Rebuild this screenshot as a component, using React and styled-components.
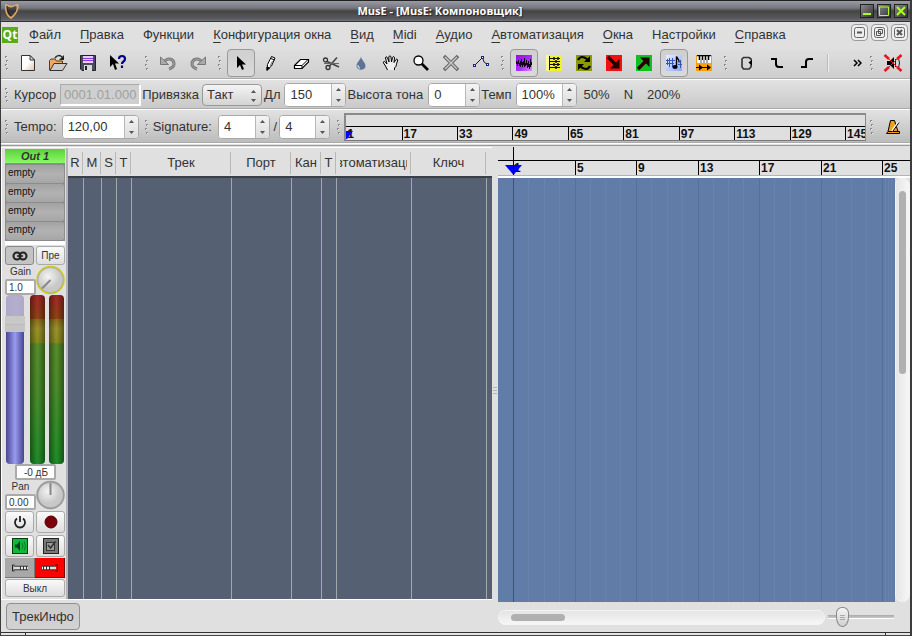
import React from "react";
import styled, { createGlobalStyle, css } from "styled-components";

const GlobalStyle = createGlobalStyle`
  * {
    box-sizing: border-box;
  }
  body {
    margin: 0;
    background: #e0e0e0;
    color: #333;
    font-family: "Liberation Sans", Arial, sans-serif;
    font-size: 13px;
  }
  button, input, select {
    font-family: inherit;
    font-size: inherit;
    color: inherit;
    margin: 0;
    padding: 0;
  }
`;

const Window = styled.div`
  min-height: 100vh;
  display: flex;
  flex-direction: column;
  border-left: 1px solid #3c3c3c;
  border-right: 2px solid #3c3c3c;
`;

/* ---------- title bar ---------- */

const TitleBar = styled.header`
  display: flex;
  align-items: center;
  height: 22px;
  padding: 0 2px 0 3px;
  border-top: 1px solid #222;
  border-bottom: 1px solid #333;
  background: linear-gradient(#9a9aa6, #77777f 35%, #454545 50%, #5a5a60 90%, #77777f);
`;

const Title = styled.h1`
  flex: 1;
  margin: 0;
  text-align: center;
  font-family: "Open Sans", sans-serif;
  font-size: 11px;
  line-height: 20px;
  font-weight: 700;
  color: #fff;
  text-shadow: 1px 1px 1px #222;
`;

const TitleButtons = styled.div`
  display: flex;
  gap: 3px;
`;

const TitleButton = styled.button`
  width: 14px;
  height: 14px;
  border: 1px solid #222;
  background: linear-gradient(135deg, #8a8a8a, #333);
  display: flex;
  align-items: center;
  justify-content: center;
`;

/* ---------- menu ---------- */

const MenuBar = styled.nav`
  display: flex;
  align-items: center;
  height: 25px;
  padding: 0 2px 0 1px;
`;

const MenuItem = styled.a`
  margin-left: 19px;
  color: #333;
  text-decoration: none;
  line-height: 20px;
  white-space: nowrap;
  &:first-of-type {
    margin-left: 11px;
  }
`;

const Key = styled.span`
  text-decoration: underline;
  text-underline-offset: 3px;
  text-decoration-thickness: 1px;
`;

const MdiButtons = styled.div`
  display: flex;
  gap: 3px;
  margin-left: auto;
  align-self: flex-start;
  padding-top: 2px;
`;

const MdiButton = styled.button`
  width: 17px;
  height: 17px;
  border: 1px solid #999;
  border-radius: 4px;
  background: #eee;
  display: flex;
  align-items: center;
  justify-content: center;
`;

/* ---------- toolbars ---------- */

const ToolBar = styled.div`
  display: flex;
  align-items: center;
  height: ${(p) => p.$height};
  padding: 0 3px 0 1px;
  background: linear-gradient(${(p) => p.$from || "#e2e2e2"}, ${(p) => p.$to || "#c8c8c8"});
  border-bottom: 1px solid #fff;
  box-shadow: inset 0 -1px #aaa;
  white-space: nowrap;
`;

const Group = styled.div`
  display: flex;
  align-items: center;
  gap: ${(p) => p.$gap || "2px"};
  margin-left: ${(p) => p.$left || "0"};
  flex: ${(p) => (p.$grow ? "1" : "none")};
  min-width: 0;
`;

const GripBox = styled.span`
  flex: none;
  display: flex;
  width: ${(p) => p.$width || "10px"};
  padding-left: 3px;
`;

const ToolButton = styled.button`
  flex: none;
  width: 28px;
  height: 28px;
  border: 1px solid transparent;
  border-radius: 4px;
  background: none;
  display: flex;
  align-items: center;
  justify-content: center;
  ${(p) =>
    p.$active &&
    css`
      border-color: #999;
      background: linear-gradient(#cfcfcf, #dadada);
    `}
`;

const Separator = styled.span`
  width: 2px;
  height: 18px;
  margin: 0 22px 0 4px;
  border-left: 1px solid #bbb;
  border-right: 1px solid #eee;
`;

const Label = styled.label`
  line-height: 20px;
  margin-right: ${(p) => p.$right || "3px"};
`;

const CursorField = styled.input`
  width: 81px;
  height: 22px;
  border: 2px solid #fff;
  border-top: 1px solid #aaa;
  border-left: 1px solid #aaa;
  margin-right: 1px;
  background: #cfcfcf;
  color: #a0a0a0;
  text-align: center;
`;

const SpinBox = styled.span`
  display: flex;
  flex: none;
  width: ${(p) => p.$width};
  height: 24px;
  border: 1px solid #a8a8a8;
  border-radius: 4px;
  background: #fff;
  overflow: hidden;
`;

const SpinInput = styled.input`
  flex: 1;
  min-width: 0;
  border: 0;
  padding-left: 5px;
  background: #fff;
`;

const SpinButtons = styled.span`
  display: flex;
  flex-direction: column;
  width: 14px;
  border-left: 1px solid #b8b8b8;
  background: linear-gradient(#f4f4f4, #dcdcdc);
`;

const SpinButton = styled.button`
  flex: 1;
  border: 0;
  background: none;
  display: flex;
  align-items: center;
  justify-content: center;
`;

const SelectBox = styled.span`
  position: relative;
  display: flex;
`;

const Select = styled.select`
  appearance: none;
  width: 60px;
  height: 22px;
  padding-left: 4px;
  border: 1px solid #999;
  border-radius: 4px;
  background: linear-gradient(#f4f4f4, #d4d4d4);
`;

const SelectArrows = styled.svg`
  position: absolute;
  right: 5px;
  top: 6px;
  pointer-events: none;
`;

const TextButton = styled.button`
  border: 0;
  background: none;
  line-height: 20px;
  padding: 0 7px;
`;

const Overview = styled.div`
  flex: 1;
  min-width: 0;
  height: 28px;
  border-top: 2px solid #8a8a8a;
  border-left: 2px solid #8a8a8a;
  border-right: 1px solid #8a8a8a;
  border-bottom: 1px solid #777;
  background: #dfdfdf;
  padding-top: 11px;
  overflow: hidden;
`;

const OverviewScale = styled.div`
  display: grid;
  grid-template-columns: repeat(9, minmax(0, 25fr)) minmax(0, 9fr);
  height: 14px;
  border-top: 1px solid #000;
`;

const Mark = styled.span`
  position: relative;
  border-left: ${(p) => (p.$first ? "0" : "1px solid #000")};
  padding-left: 1px;
  overflow: ${(p) => (p.$first ? "visible" : "hidden")};
  font-size: 12px;
  line-height: 14px;
  font-weight: 700;
  color: #111;
`;

const OverviewCursor = styled.svg`
  position: absolute;
  left: 0;
  top: 3px;
`;

/* ---------- main area ---------- */

const Main = styled.main`
  flex: 1;
  display: flex;
  margin-top: 1px;
  border-top: 1px solid #999;
  padding-top: 1px;
`;

const LeftSide = styled.section`
  display: flex;
  flex-direction: column;
  width: 491px;
`;

const Tracks = styled.div`
  flex: 1;
  display: flex;
  border-top: 1px solid #fff;
  border-bottom: 1px solid #fff;
`;

const Strip = styled.div`
  flex: none;
  width: 67px;
  padding: 1px 1px 0 3px;
  border-left: 1px solid #fff;
  border-right: 2px solid #b4b4b4;
  display: flex;
  flex-direction: column;
  font-size: 10px;
`;

const StripName = styled.div`
  height: 14px;
  line-height: 14px;
  text-align: center;
  font-size: 11px;
  font-weight: 700;
  font-style: italic;
  background: linear-gradient(#5cd03c, #8bfa66);
`;

const Rack = styled.ul`
  list-style: none;
  margin: 0 0 1px;
  padding: 2px 1px 0;
  background: #8c8c8c;
  border-bottom: 4px solid #fff;
`;

const RackSlot = styled.li`
  height: 18px;
  margin-bottom: 1px;
  padding-left: 2px;
  line-height: 16px;
  color: #111;
  border-radius: 2px;
  background: linear-gradient(#a2a2a2, #b2b2b2 50%, #a6a6a6);
`;

const StripRow = styled.div`
  display: flex;
  justify-content: space-between;
  gap: ${(p) => p.$gap || "2px"};
  margin-bottom: ${(p) => p.$bottom || "0"};
`;

const StripButton = styled.button`
  flex: 1;
  height: ${(p) => p.$height || "18px"};
  border: 1px solid ${(p) => (p.$pressed ? "#888" : "#aaa")};
  border-radius: 3px;
  background: ${(p) => (p.$pressed ? "#c4c4c4" : "linear-gradient(#fafafa, #dedede)")};
  display: flex;
  align-items: center;
  justify-content: center;
`;

const RouteButton = styled.button`
  flex: 1;
  height: 20px;
  border: 1px solid ${(p) => (p.$on ? "#700" : "#777")};
  border-width: 0 1px 1px 0;
  background: ${(p) => (p.$on ? "#ff0000" : "#a8a8a8")};
  display: flex;
  align-items: center;
  justify-content: center;
`;

const KnobField = styled.div`
  display: flex;
  flex-direction: column;
  align-items: center;
  width: 31px;
`;

const KnobLabel = styled.label`
  line-height: 14px;
  height: 14px;
`;

const ValueInput = styled.input`
  width: ${(p) => p.$width || "31px"};
  height: 16px;
  border: 2px solid #aaa;
  border-radius: 2px;
  background: #fff;
  text-align: ${(p) => p.$align || "left"};
  padding-left: 2px;
`;

const KnobBox = styled.div`
  position: relative;
  width: 29px;
  height: 30px;
  flex: none;
`;

const KnobRange = styled.input`
  position: absolute;
  inset: 0;
  width: 100%;
  height: 100%;
  opacity: 0;
`;

const Meters = styled.div`
  flex: 1;
  min-height: 169px;
  display: flex;
  gap: 4px;
  padding: 0 1px;
`;

const Fader = styled.input`
  appearance: none;
  writing-mode: vertical-lr;
  direction: rtl;
  width: 18px;
  margin-right: 2px;
  border-radius: 4px;
  background: linear-gradient(#b5b0ccee 22%, transparent 22%),
    linear-gradient(90deg, #45458f, #9a9af0 50%, #45458f);
  &::-webkit-slider-thumb {
    appearance: none;
    width: 20px;
    height: 16px;
    background: linear-gradient(#c8c8c8 50%, #b8b8b8 50%, #c4c4c4 60%);
  }
`;

const Meter = styled.div`
  width: 15px;
  border-radius: 4px;
  background: linear-gradient(90deg, #0006, transparent 45%, transparent 55%, #0006),
    linear-gradient(#a02626, #8c4414 14%, #8a6a1a 14%, #98902a 20%, #888a1a 28%, #558a2a 29%, #4a8a2a 55%, #1e8a28);
`;

const Below = styled.div`
  display: flex;
  justify-content: center;
`;

const TableArea = styled.div`
  flex: 1;
  min-width: 0;
`;

const TrackTable = styled.table`
  width: 100%;
  height: 100%;
  table-layout: fixed;
  border-collapse: separate;
  border-spacing: 0;
`;

const HeadCell = styled.th`
  height: 30px;
  padding: 1px 0 0;
  border-bottom: 2px solid #3a4048;
  font-weight: 400;
`;

const HeadText = styled.div`
  display: flex;
  justify-content: center;
  height: 22px;
  line-height: 22px;
  margin-right: 1px;
  border-right: ${(p) => (p.$last ? "0" : "1px solid #b8b8b8")};
`;

const HeadClip = styled.span`
  display: flex;
  justify-content: center;
  flex: 1;
  min-width: 0;
  margin: 0 3px;
  overflow: hidden;
  white-space: nowrap;
`;

const BodyCell = styled.td`
  padding: 0;
  background: #556172;
  border-right: ${(p) => (p.$last ? "0" : "1px solid #a3a6ab")};
`;

const TrackInfoRow = styled.div`
  padding: 3px 5px 2px;
`;

const TrackInfoButton = styled.button`
  height: 27px;
  padding: 0 5px;
  border: 1px solid #909090;
  border-radius: 4px;
  background: linear-gradient(#cccccc, #d2d2d2);
`;

const Splitter = styled.div`
  width: 6px;
  display: flex;
  align-items: center;
  justify-content: center;
`;

const Arranger = styled.section`
  flex: 1;
  min-width: 0;
  display: flex;
  flex-direction: column;
`;

const barColumns = css`
  display: grid;
  grid-template-columns: 15px 62px 61px 62px 61px 62px 61px minmax(0, 1fr);
`;

const Ruler = styled.div`
  position: relative;
  height: 31px;
  padding-top: 13px;
  border-bottom: 2px solid #fff;
  box-shadow: inset 0 -1px #b4b4b4;
`;

const RulerScale = styled.div`
  ${barColumns}
  height: 15px;
  border-top: 1px solid #000;
`;

const Playhead = styled.svg`
  position: absolute;
  left: 6px;
  top: 0;
`;

const CanvasRow = styled.div`
  flex: 1;
  display: flex;
`;

const Canvas = styled.div`
  ${barColumns}
  flex: 1;
  background: #617ca7;
`;

const CanvasBar = styled.div`
  display: grid;
  grid-template-columns: repeat(4, 1fr);
  border-left: 1px solid ${(p) => (p.$current ? "#e0101c" : "#55709a")};
  overflow: hidden;
`;

const Beat = styled.span`
  border-right: 1px solid #6783ae;
  &:last-child {
    border-right: 0;
  }
`;

const VScroll = styled.div`
  width: 15px;
  padding: 12px 3px;
  border-radius: 7px;
  border: 1px solid #f2f2f2;
  background: linear-gradient(90deg, #e6e6e6, #f6f6f6);
`;

const VThumb = styled.div`
  width: 7px;
  height: 46%;
  margin: 0 auto;
  border-radius: 4px;
  background: #b0b0b0;
`;

const ScrollRow = styled.div`
  display: flex;
  align-items: center;
  height: 30px;
  padding-right: 16px;
  gap: 3px;
`;

const HScroll = styled.div`
  flex: 1;
  height: 15px;
  padding: 3px 12px;
  border: 1px solid #f4f4f4;
  border-radius: 7px;
  background: linear-gradient(#e4e4e4, #f6f6f6);
`;

const HThumb = styled.div`
  width: 18%;
  height: 7px;
  border-radius: 4px;
  background: #b0b0b0;
`;

const ZoomRange = styled.input`
  appearance: none;
  width: 66px;
  height: 22px;
  background: linear-gradient(transparent 9px, #aaa 9px, #c8c8c8 12px, #fff 12px, #fff 13px, transparent 13px);
  &::-webkit-slider-thumb {
    appearance: none;
    width: 13px;
    height: 20px;
    border: 1px solid #888;
    border-radius: 6px 6px 6px 6px / 6px 6px 10px 10px;
    background: linear-gradient(transparent 7px, #aaa 7px, #aaa 8px, transparent 8px, transparent 9px, #aaa 9px, #aaa 10px, transparent 10px, transparent 11px, #aaa 11px, #aaa 12px, transparent 12px) 3px 0 / 5px 100% no-repeat,
      linear-gradient(#f4f4f4, #d0d0d0);
  }
`;

const WindowFoot = styled.footer`
  display: flex;
  justify-content: space-between;
  height: 5px;
  padding: 0 24px;
  border-top: 1px solid #333;
  border-bottom: 2px solid #444;
  background: #e4e4e4;
`;

const FootMark = styled.span`
  width: 1px;
  background: #333;
`;

/* ---------- icons ---------- */

const Icon = ({ w = 16, h = 16, children }) => (
  <svg width={w} height={h} viewBox={`0 0 ${w} ${h}`} fill="none" aria-hidden="true">
    {children}
  </svg>
);

const Grip = ({ width }) => (
  <GripBox $width={width}>
    <Icon w={4} h={14}>
      {[0, 4, 8, 12].map((y) => (
        <g key={y}>
          <rect x={y % 8 ? 1 : 0} y={y} width="2" height="2" fill="#8a8a8a" />
          <rect x={y % 8 ? 2 : 1} y={y + 1} width="1" height="1" fill="#f6f6f6" />
        </g>
      ))}
    </Icon>
  </GripBox>
);

const Harp = () => (
  <Icon w={16} h={18}>
    <path d="M2 2C1 9 3 14 7 16C11 13 14 9 14 3C11 2 9 7 3 3" stroke="#e0a868" strokeWidth="1.6" />
    <path d="M5 5V12M7 6V14M9 5V12M11 4V10" stroke="#222" />
    <path d="M3 4C3 9 5 12 7 14" stroke="#2a1a10" />
  </Icon>
);

const QtLogo = styled.span`
  width: 16px;
  height: 16px;
  background: #5caa15;
  color: #fff;
  font: 700 12px/16px "Open Sans", sans-serif;
  text-align: center;
`;

const NewIcon = () => (
  <Icon w={16} h={18}>
    <defs>
      <linearGradient id="paper" x1="0" y1="0" x2="1" y2="1">
        <stop offset=".5" stopColor="#fff" />
        <stop offset="1" stopColor="#d8c0b0" />
      </linearGradient>
    </defs>
    <path d="M1.5 1.5H10L14.5 6V16.5H1.5Z" fill="url(#paper)" stroke="#333" />
    <path d="M10 1.5V6H14.5Z" fill="#ddd" stroke="#333" />
  </Icon>
);

const OpenIcon = () => (
  <Icon w={20} h={18}>
    <path d="M1.5 16V6.5L3 5H7L8.5 7H14.5V16Z" fill="#f0a860" stroke="#5a3a1a" />
    <path d="M2 16.5L6 9.5H19L14.5 16.5Z" fill="#ccc" stroke="#333" />
    <path d="M7 4C9 1 12 1 14 3" stroke="#222" strokeWidth="1.5" />
    <path d="M16 1V6H11Z" fill="#222" />
  </Icon>
);

const SaveIcon = () => (
  <Icon w={18} h={18}>
    <path d="M1.5 1.5H16.5V16.5H3L1.5 15Z" fill="#4a4a60" stroke="#222" />
    <rect x="4" y="2" width="10" height="7" fill="#e8ccff" />
    <path d="M4 4.5H14M4 6.5H14" stroke="#8a3ae0" />
    <rect x="5" y="11" width="8" height="6" fill="#d8d8d8" />
    <rect x="6" y="12" width="2" height="4" fill="#222" />
  </Icon>
);

const WhatsThisIcon = () => (
  <Icon w={18} h={18}>
    <path d="M1 1V13L4 10L6 16L8 15L6 9.5H10Z" fill="#000" />
    <path d="M10 5C10 1 16 1 16 5C16 8 13 7 13 10M13 11.5V14" stroke="#00008a" strokeWidth="2.2" />
  </Icon>
);

const UndoIcon = ({ flip }) => (
  <Icon w={18} h={16}>
    <g transform={flip ? "translate(18 0) scale(-1 1)" : undefined}>
      <path d="M5 7C9 2 15 4 15 9C15 11 13 13 10 14" stroke="#777" strokeWidth="3" />
      <path d="M5 7C9 2 15 4 15 9C15 11 13 13 10 14" stroke="#aaa" />
      <path d="M1.5 2V9.5H9.5Z" fill="#aaa" stroke="#777" />
    </g>
  </Icon>
);

const PointerIcon = () => (
  <Icon>
    <path d="M4 1V13L7 10L9 15L11 14L9 9.5H13Z" fill="#000" />
  </Icon>
);

const PencilIcon = () => (
  <Icon>
    <path d="M4.5 9.5L8.5 1.5L12 3L8.5 11L4 15Z" fill="#fff" stroke="#000" />
    <path d="M4 12L6.5 13L4 15.5ZM8 3.5L11.5 5" fill="#000" stroke="#000" />
    <path d="M9.5 6L7 11" stroke="#777" />
  </Icon>
);

const EraserIcon = () => (
  <Icon w={18} h={16}>
    <path d="M2.5 10.5L8.5 4.5H16.5V7L10 13.5H2.5Z" fill="#fff" stroke="#000" strokeWidth="1.2" />
    <path d="M2.5 10.5H10L16 4.5M10 10.5V13.5" stroke="#000" />
  </Icon>
);

const ScissorsIcon = () => (
  <Icon w={18} h={16}>
    <path d="M5 6.5L17 12M7.5 11L15 2.5" stroke="#444" strokeWidth="1.6" />
    <path d="M2 8.5H17" stroke="#666" />
    <circle cx="3.5" cy="5" r="2" stroke="#333" strokeWidth="1.3" />
    <circle cx="6" cy="12.5" r="2" stroke="#333" strokeWidth="1.3" />
  </Icon>
);

const DropIcon = () => (
  <Icon>
    <path d="M8 1C8 5 3.5 7 3.5 11C3.5 16 12.5 16 12.5 11C12.5 7 8 5 8 1Z" fill="#5e7494" />
    <path d="M5 10C5 12 6 13 7 13" stroke="#c0cede" strokeWidth="1.4" />
  </Icon>
);

const HandIcon = () => (
  <Icon w={18} h={16}>
    <path
      d="M5.5 15L3.5 11L1.5 8C1 6 3 6 4 8L5 9L3.5 3C3.5 1.5 5 1.5 5.5 3L7 7L6.8 2C7 .5 8.8 .5 9 2L9.5 7L10.5 2.5C11 1 12.5 1.5 12.5 3L12 7.5L14 4.5C15 3.5 16 4.5 15.5 6C14 9 15 11 12.5 13V15"
      fill="#eee"
      stroke="#000"
    />
  </Icon>
);

const ZoomIcon = () => (
  <Icon w={18} h={18}>
    <path d="M9.5 9.5L16 16" stroke="#000" strokeWidth="2.6" />
    <circle cx="6.5" cy="6.5" r="4.5" fill="#fff" stroke="#000" strokeWidth="1.3" />
  </Icon>
);

const CrossIcon = () => (
  <Icon w={18} h={18}>
    <path d="M2 2L16 16M16 2L2 16" stroke="#666" strokeWidth="3.4" />
    <path d="M3 3L15 15M15 3L3 15" stroke="#ccc" strokeWidth="1.4" />
  </Icon>
);

const LineIcon = () => (
  <Icon w={18} h={16}>
    <path d="M2.5 10.5L10.5 2.5L12 7L15.5 9.5" stroke="#222" />
    <g fill="#fff" stroke="#102a7a">
      <rect x="1.5" y="9.5" width="2" height="2" />
      <rect x="9.5" y="1.5" width="2" height="2" />
      <rect x="14.5" y="8.5" width="2" height="2" />
    </g>
  </Icon>
);

const WaveIcon = () => (
  <Icon>
    <defs>
      <linearGradient id="wave" x1="0" y1="0" x2="1" y2="1">
        <stop offset="0" stopColor="#9010e0" />
        <stop offset=".6" stopColor="#b030ff" />
        <stop offset="1" stopColor="#d890ff" />
      </linearGradient>
    </defs>
    <rect width="16" height="16" fill="url(#wave)" />
    <path d="M.5 6V9M1.5 7V11M2.5 5V9M3.5 8V11M4.5 6V12M5.5 4V10M6.5 7V12M7.5 6V10M8.5 3V12M9.5 8V11M10.5 5V10M11.5 8V13M12.5 6V12M13.5 9V14M14.5 4V12M15.5 7V10" stroke="#14001e" />
  </Icon>
);

const DrumIcon = () => (
  <Icon>
    <rect width="16" height="16" fill="#f2f22a" />
    <path d="M0 0H3V16H0Z" fill="#fafa9a" />
    <path d="M3.5 1V15M3 3.5H14M3 6.5H14M3 9.5H14M3 12.5H14" stroke="#111" />
    <path d="M7 3.5H9M11 3.5H13M9 6.5H11M7 9.5H9M11 9.5H13M9 12.5H11" stroke="#111" strokeWidth="2.4" />
  </Icon>
);

const CycleIcon = () => (
  <Icon>
    <rect width="16" height="16" fill="#8a9a00" />
    <path d="M2 5C4 1 8 1 12 5M14 11C12 15 8 15 4 11" stroke="#000" strokeWidth="2.2" />
    <path d="M14 1V7H8ZM2 15V9H8Z" fill="#000" />
  </Icon>
);

const ArrowIcon = ({ color, up }) => (
  <Icon>
    <rect width="16" height="16" fill={color} />
    <g transform={up ? "translate(0 16) scale(1 -1)" : undefined}>
      <path d="M2 2L10 10" stroke="#200" strokeWidth="3.2" />
      <path d="M13.5 4V13.5H4Z" fill="#200" />
    </g>
  </Icon>
);

const NotesIcon = () => (
  <Icon>
    <defs>
      <linearGradient id="notes" x1="0" y1="0" x2="1" y2="1">
        <stop offset="0" stopColor="#e8f0ff" />
        <stop offset="1" stopColor="#88a8f8" />
      </linearGradient>
    </defs>
    <rect width="16" height="16" fill="url(#notes)" />
    <path d="M0 5.5H9M0 8.5H8M3.5 3V12M6.5 3V12M1.5 4V10M12 9.5H16M14.5 5V13" stroke="#3355bb" />
    <path d="M10.5 12V1.5C11 4 14 4 13 7.5" stroke="#000" strokeWidth="1.4" />
    <ellipse cx="9" cy="12" rx="2.6" ry="2" fill="#000" />
  </Icon>
);

const PianoIcon = () => (
  <Icon>
    <rect width="16" height="16" fill="#f8a010" />
    <rect x="1" y="1" width="14" height="7" fill="#fff" />
    <path d="M1 .5H15M3.5 1V5M6.5 1V5M9.5 1V5M12.5 1V5" stroke="#000" strokeWidth="1.6" />
    <path d="M5 5V8M8 5V8M11 5V8" stroke="#333" strokeWidth=".8" />
    <path d="M0 12.5H14" stroke="#000" />
    <path d="M3 9.5V15.5L7 12.5ZM11 9.5V15.5L15 12.5Z" fill="#000" />
  </Icon>
);

const LoopIcon = () => (
  <Icon>
    <path d="M12 5V4L10 2.5H4.5L3 4V12L4.5 14H10L12 12V10" stroke="#333" strokeWidth="1.6" />
    <path d="M9.5 7.5L13 4.5V11Z" fill="#000" />
  </Icon>
);

const PunchIcon = ({ up }) => (
  <Icon>
    <path d={up ? "M2 12H7V7Q7 4 10 4H14" : "M2 4H7V9Q7 12 10 12H14"} stroke="#000" strokeWidth="2" />
  </Icon>
);

const MuteIcon = () => (
  <Icon w={20} h={18}>
    <path d="M4 7H7L11 3V15L7 11H4Z" fill="#000" />
    <path d="M12.5 5V13M15.5 4Q17.5 9 15.5 14" stroke="#222" />
    <path d="M1.5 1L6 5M14 13L18.5 17M18.5 1L14 5M6 13L1.5 17" stroke="#f0101c" strokeWidth="2.6" />
    <path d="M6 5L14 13M14 5L6 13" stroke="#f0101c" strokeWidth="1" />
  </Icon>
);

const MetronomeIcon = () => (
  <Icon>
    <path d="M5.5 1.5H9.5L13 12.5H3Z" fill="#f0a020" stroke="#000" />
    <path d="M1.5 14.5H14.5V12.5H3Z" fill="#f0a020" stroke="#000" />
    <path d="M7 12L13.5 3" stroke="#fff" strokeWidth="2" />
    <path d="M8 12L14 3.5" stroke="#000" />
  </Icon>
);

const LinkIcon = () => (
  <Icon w={16} h={10}>
    <circle cx="5" cy="5" r="3.5" stroke="#222" strokeWidth="2" />
    <circle cx="11" cy="5" r="3.5" stroke="#222" strokeWidth="2" />
    <path d="M5 5H11" stroke="#222" strokeWidth="1.5" />
  </Icon>
);

const PowerIcon = () => (
  <Icon w={14} h={14}>
    <path d="M4 3.5A5 5 0 1 0 10 3.5" stroke="#222" strokeWidth="1.8" />
    <path d="M7 1V7" stroke="#222" strokeWidth="1.8" />
  </Icon>
);

const RecordIcon = () => (
  <Icon w={14} h={14}>
    <circle cx="7" cy="7" r="6" fill="#7c0008" stroke="#4a0004" />
  </Icon>
);

const SpeakerIcon = () => (
  <Icon>
    <rect x=".5" y=".5" width="15" height="15" fill="#12b83a" stroke="#063a10" />
    <path d="M3 6.5H5L8 3V13L5 9.5H3Z" fill="#042" />
    <path d="M10 5Q12 8 10 11M12 3.5Q15 8 12 12.5" stroke="#0a7a2a" />
  </Icon>
);

const CheckIcon = () => (
  <Icon>
    <rect x=".5" y=".5" width="15" height="15" fill="#777" stroke="#222" />
    <rect x="3.5" y="4.5" width="8" height="8" fill="#999" stroke="#333" />
    <path d="M5 7L7.5 10L12.5 3.5" stroke="#333" strokeWidth="1.5" />
  </Icon>
);

const JackIcon = ({ flip }) => (
  <Icon w={18} h={8}>
    <g transform={flip ? "translate(18 0) scale(-1 1)" : undefined}>
      <path d="M3.5 1H1.5V7H3.5" stroke="#222" />
      <path d="M3 4H17" stroke="#333" strokeWidth="4.5" />
      <path d="M3 4H9" stroke="#ddd" strokeWidth="2.5" />
      <path d="M10 4H17" stroke="#eee" strokeWidth="2.5" strokeDasharray="2 1" />
    </g>
  </Icon>
);

/* ---------- parts ---------- */

const Spin = ({ id, value, width }) => (
  <SpinBox $width={width}>
    <SpinInput id={id} defaultValue={value} />
    <SpinButtons>
      <SpinButton aria-label="+">
        <Icon w={5} h={3}>
          <path d="M2.5 0L5 3H0Z" fill="#555" />
        </Icon>
      </SpinButton>
      <SpinButton aria-label="-">
        <Icon w={5} h={3}>
          <path d="M2.5 3L5 0H0Z" fill="#555" />
        </Icon>
      </SpinButton>
    </SpinButtons>
  </SpinBox>
);

const Knob = ({ label, ring, angle }) => (
  <KnobBox>
    <Icon w={29} h={30}>
      <defs>
        <radialGradient id="knobFace" cx=".4" cy=".35">
          <stop offset="0" stopColor="#f4f4f4" />
          <stop offset="1" stopColor="#c8c8c8" />
        </radialGradient>
      </defs>
      <circle cx="14.5" cy="15" r="13.5" fill="#b0b0b0" stroke={ring} strokeWidth="1.5" />
      <circle cx="14.5" cy="15" r="12" fill="url(#knobFace)" />
      <path d="M14.5 15V3" stroke="#888" strokeWidth="2" transform={`rotate(${angle} 14.5 15)`} />
    </Icon>
    <KnobRange type="range" aria-label={label} />
  </KnobBox>
);

const menu = [
  ["", "Ф", "айл"],
  ["", "П", "равка"],
  ["Функции", "", ""],
  ["", "К", "онфигурация окна"],
  ["", "В", "ид"],
  ["", "M", "idi"],
  ["", "А", "удио"],
  ["", "А", "втоматизация"],
  ["", "О", "кна"],
  ["Н", "а", "стройки"],
  ["", "С", "правка"],
];

const columns = [
  ["R", 16],
  ["M", 18],
  ["S", 15],
  ["T", 15],
  ["Трек", 100],
  ["Порт", 60],
  ["Кан", 30],
  ["T", 15],
  ["Автоматизация", 75],
  ["Ключ", 75],
  ["", null],
];

const tools = [
  ["Pointer", PointerIcon],
  ["Pencil", PencilIcon],
  ["Eraser", EraserIcon],
  ["Cut", ScissorsIcon],
  ["Glue", DropIcon],
  ["Pan", HandIcon],
  ["Zoom", ZoomIcon],
  ["Mute", CrossIcon],
  ["Automation", LineIcon],
];

const overviewBars = [1, 17, 33, 49, 65, 81, 97, 113, 129, 145];
const bars = [1, 5, 9, 13, 17, 21, 25];

const Mixer = () => (
  <Strip>
    <StripName>Out 1</StripName>
    <Rack>
      {[0, 1, 2, 3].map((i) => (
        <RackSlot key={i}>empty</RackSlot>
      ))}
    </Rack>
    <StripRow>
      <StripButton $pressed $height="19px" aria-label="Stereo"><LinkIcon /></StripButton>
      <StripButton $height="19px">Пре</StripButton>
    </StripRow>
    <StripRow $gap="0px">
      <KnobField>
        <KnobLabel htmlFor="gain">Gain</KnobLabel>
        <ValueInput id="gain" defaultValue="1.0" />
      </KnobField>
      <Knob label="Gain" ring="#c8c820" angle={-135} />
    </StripRow>
    <Meters>
      <Fader type="range" aria-label="Volume" defaultValue="86" />
      <Meter />
      <Meter />
    </Meters>
    <Below>
      <ValueInput $width="41px" $align="center" aria-label="Volume" defaultValue="-0 дБ" />
    </Below>
    <StripRow $gap="0px" $bottom="1px">
      <KnobField>
        <KnobLabel htmlFor="pan">Pan</KnobLabel>
        <ValueInput id="pan" defaultValue="0.00" />
      </KnobField>
      <Knob label="Pan" ring="#999" angle={0} />
    </StripRow>
    <StripRow $bottom="2px">
      <StripButton $height="22px" aria-label="Power"><PowerIcon /></StripButton>
      <StripButton $height="22px" aria-label="Record"><RecordIcon /></StripButton>
    </StripRow>
    <StripRow $bottom="1px">
      <StripButton $height="22px" aria-label="Mute"><SpeakerIcon /></StripButton>
      <StripButton $height="22px" aria-label="Solo"><CheckIcon /></StripButton>
    </StripRow>
    <StripRow $gap="0px" $bottom="1px">
      <RouteButton aria-label="Input"><JackIcon /></RouteButton>
      <RouteButton $on aria-label="Output"><JackIcon flip /></RouteButton>
    </StripRow>
    <StripRow $bottom="2px">
      <StripButton>Выкл</StripButton>
    </StripRow>
  </Strip>
);

const App = () => {
  return (
    <Window>
      <GlobalStyle />
      <TitleBar>
        <Harp />
        <Title>MusE - [MusE: Компоновщик]</Title>
        <TitleButtons>
          <TitleButton aria-label="Minimize">
            <Icon w={10} h={10}><path d="M1 8H9" stroke="#aaff20" strokeWidth="2" /></Icon>
          </TitleButton>
          <TitleButton aria-label="Maximize">
            <Icon w={10} h={10}><path d="M.5 1H9.5V9.5H.5Z" stroke="#aaff20" /></Icon>
          </TitleButton>
          <TitleButton aria-label="Close">
            <Icon w={10} h={10}><path d="M1 1L9 9M9 1L1 9" stroke="#aaff20" strokeWidth="2" /></Icon>
          </TitleButton>
        </TitleButtons>
      </TitleBar>

      <MenuBar>
        <QtLogo>Qt</QtLogo>
        {menu.map(([before, key, after]) => (
          <MenuItem href="#" key={before + key + after}>
            {before}
            <Key>{key}</Key>
            {after}
          </MenuItem>
        ))}
        <MdiButtons>
          <MdiButton aria-label="Minimize">
            <Icon w={13} h={13}><rect x="1.5" y="1.5" width="10" height="10" rx="2" stroke="#666" /><path d="M4 6.5H9" stroke="#555" strokeWidth="2" /></Icon>
          </MdiButton>
          <MdiButton aria-label="Restore">
            <Icon w={13} h={13}><rect x="1.5" y="1.5" width="10" height="10" rx="2" stroke="#666" /><path d="M5.5 3.5H9.5V7.5H5.5ZM3.5 5.5H7.5V9.5H3.5Z" stroke="#555" /></Icon>
          </MdiButton>
          <MdiButton aria-label="Close">
            <Icon w={13} h={13}><rect x="1.5" y="1.5" width="10" height="10" rx="2" stroke="#666" /><path d="M4 4L9 9M9 4L4 9" stroke="#555" strokeWidth="2" /></Icon>
          </MdiButton>
        </MdiButtons>
      </MenuBar>

      <ToolBar $height="33px" $from="#e0e0e0" $to="#cdcdcd">
        <Group>
          <Grip />
          <ToolButton aria-label="New"><NewIcon /></ToolButton>
          <ToolButton aria-label="Open"><OpenIcon /></ToolButton>
          <ToolButton aria-label="Save"><SaveIcon /></ToolButton>
          <ToolButton aria-label="What's this"><WhatsThisIcon /></ToolButton>
        </Group>
        <Group $left="10px">
          <Grip />
          <ToolButton aria-label="Undo"><UndoIcon /></ToolButton>
          <ToolButton aria-label="Redo"><UndoIcon flip /></ToolButton>
        </Group>
        <Group $left="3px">
          <Grip />
          {tools.map(([name, ToolIcon], i) => (
            <ToolButton key={name} aria-label={name} $active={i === 0}>
              <ToolIcon />
            </ToolButton>
          ))}
        </Group>
        <Group $left="3px">
          <Grip />
          <ToolButton $active aria-label="Wave"><WaveIcon /></ToolButton>
          <ToolButton aria-label="Mixer"><DrumIcon /></ToolButton>
          <ToolButton aria-label="Cycle"><CycleIcon /></ToolButton>
          <ToolButton aria-label="Input"><ArrowIcon color="#f01010" /></ToolButton>
          <ToolButton aria-label="Output"><ArrowIcon color="#10c020" up /></ToolButton>
          <ToolButton $active aria-label="Score"><NotesIcon /></ToolButton>
          <ToolButton aria-label="Piano roll"><PianoIcon /></ToolButton>
        </Group>
        <Group $left="3px">
          <Grip />
          <ToolButton aria-label="Loop"><LoopIcon /></ToolButton>
          <ToolButton aria-label="Punch in"><PunchIcon /></ToolButton>
          <ToolButton aria-label="Punch out"><PunchIcon up /></ToolButton>
          <Separator />
          <Icon w={9} h={8}>
            <path d="M1 1L4 4L1 7M5 1L8 4L5 7" stroke="#000" strokeWidth="1.5" />
          </Icon>
        </Group>
        <Group $left="auto">
          <Grip />
          <ToolButton aria-label="Panic"><MuteIcon /></ToolButton>
        </Group>
      </ToolBar>

      <ToolBar $height="30px">
        <Grip width="12px" />
        <Label htmlFor="cursor" $right="4px">Курсор</Label>
        <CursorField id="cursor" defaultValue="0001.01.000" disabled />
        <Label htmlFor="snap">Привязка</Label>
        <SelectBox>
          <Select id="snap" defaultValue="Такт">
            <option>Такт</option>
          </Select>
          <SelectArrows width="7" height="12" viewBox="0 0 7 12" aria-hidden="true">
            <path d="M3.5 0L6 3H1ZM3.5 12L6 9H1Z" fill="#555" />
          </SelectArrows>
        </SelectBox>
        <Group $left="2px" $gap="1px">
          <Label htmlFor="len">Дл</Label>
          <Spin id="len" value="150" width="62px" />
          <Label htmlFor="pitch" $right="4px">Высота тона</Label>
          <Spin id="pitch" value="0" width="52px" />
          <Label htmlFor="rate">Темп</Label>
          <Spin id="rate" value="100%" width="61px" />
        </Group>
        <TextButton>50%</TextButton>
        <TextButton>N</TextButton>
        <TextButton>200%</TextButton>
      </ToolBar>

      <ToolBar $height="34px" $to="#bbbbbb">
        <Grip width="12px" />
        <Label htmlFor="tempo" $right="5px">Tempo:</Label>
        <Spin id="tempo" value="120,00" width="77px" />
        <Group $left="3px" $gap="0px">
          <Grip width="11px" />
          <Label htmlFor="sigz" $right="6px">Signature:</Label>
          <Spin id="sigz" value="4" width="52px" />
          <Label htmlFor="sign" $right="2px">&nbsp;/</Label>
          <Spin id="sign" value="4" width="51px" />
        </Group>
        <Group $left="4px" $gap="0px" $grow>
          <Grip />
          <Overview>
            <OverviewScale>
              {overviewBars.map((n, i) => (
                <Mark key={n} $first={i === 0}>
                  {i === 0 && (
                    <OverviewCursor width="8" height="9" viewBox="0 0 8 9" aria-hidden="true">
                      <path d="M0 1H7L1 9H0Z" fill="#0000ff" />
                    </OverviewCursor>
                  )}
                  {n}
                </Mark>
              ))}
            </OverviewScale>
          </Overview>
        </Group>
        <Group $left="1px">
          <Grip />
          <ToolButton aria-label="Metronome"><MetronomeIcon /></ToolButton>
        </Group>
      </ToolBar>

      <Main>
        <LeftSide>
          <Tracks>
            <Mixer />
            <TableArea>
              <TrackTable>
                <colgroup>
                  {columns.map(([name, width], i) => (
                    <col key={i} width={width || undefined} />
                  ))}
                </colgroup>
                <thead>
                  <tr>
                    {columns.map(([name], i) => (
                      <HeadCell key={i} scope="col">
                        <HeadText $last={i === columns.length - 1}>
                          {name.length > 3 ? <HeadClip>{name}</HeadClip> : name}
                        </HeadText>
                      </HeadCell>
                    ))}
                  </tr>
                </thead>
                <tbody>
                  <tr>
                    {columns.map((c, i) => (
                      <BodyCell key={i} $last={i === columns.length - 1} />
                    ))}
                  </tr>
                </tbody>
              </TrackTable>
            </TableArea>
          </Tracks>
          <TrackInfoRow>
            <TrackInfoButton>ТрекИнфо</TrackInfoButton>
          </TrackInfoRow>
        </LeftSide>
        <Splitter>
          <Icon w={4} h={8}>
            <path d="M0 1.5H4M0 4.5H4M0 7.5H4" stroke="#b4b4b4" />
          </Icon>
        </Splitter>
        <Arranger>
          <Ruler>
            <RulerScale>
              <span />
              {bars.map((n, i) => (
                <Mark key={n} $first={i === 0}>{n}</Mark>
              ))}
            </RulerScale>
            <Playhead width="19" height="30" viewBox="0 0 19 30" aria-hidden="true">
              <path d="M1 18H18L9.5 28Z" fill="#0000ff" />
              <path d="M9.5 0V28" stroke="#000" />
            </Playhead>
          </Ruler>
          <CanvasRow>
            <Canvas>
              <span />
              {bars.map((n, i) => (
                <CanvasBar key={n} $current={i === 0}>
                  <Beat />
                  <Beat />
                  <Beat />
                  <Beat />
                </CanvasBar>
              ))}
            </Canvas>
            <VScroll>
              <VThumb />
            </VScroll>
          </CanvasRow>
          <ScrollRow>
            <HScroll>
              <HThumb />
            </HScroll>
            <ZoomRange type="range" aria-label="Zoom" defaultValue="15" />
          </ScrollRow>
        </Arranger>
      </Main>
      <WindowFoot>
        <FootMark />
        <FootMark />
      </WindowFoot>
    </Window>
  );
};

export default App;
